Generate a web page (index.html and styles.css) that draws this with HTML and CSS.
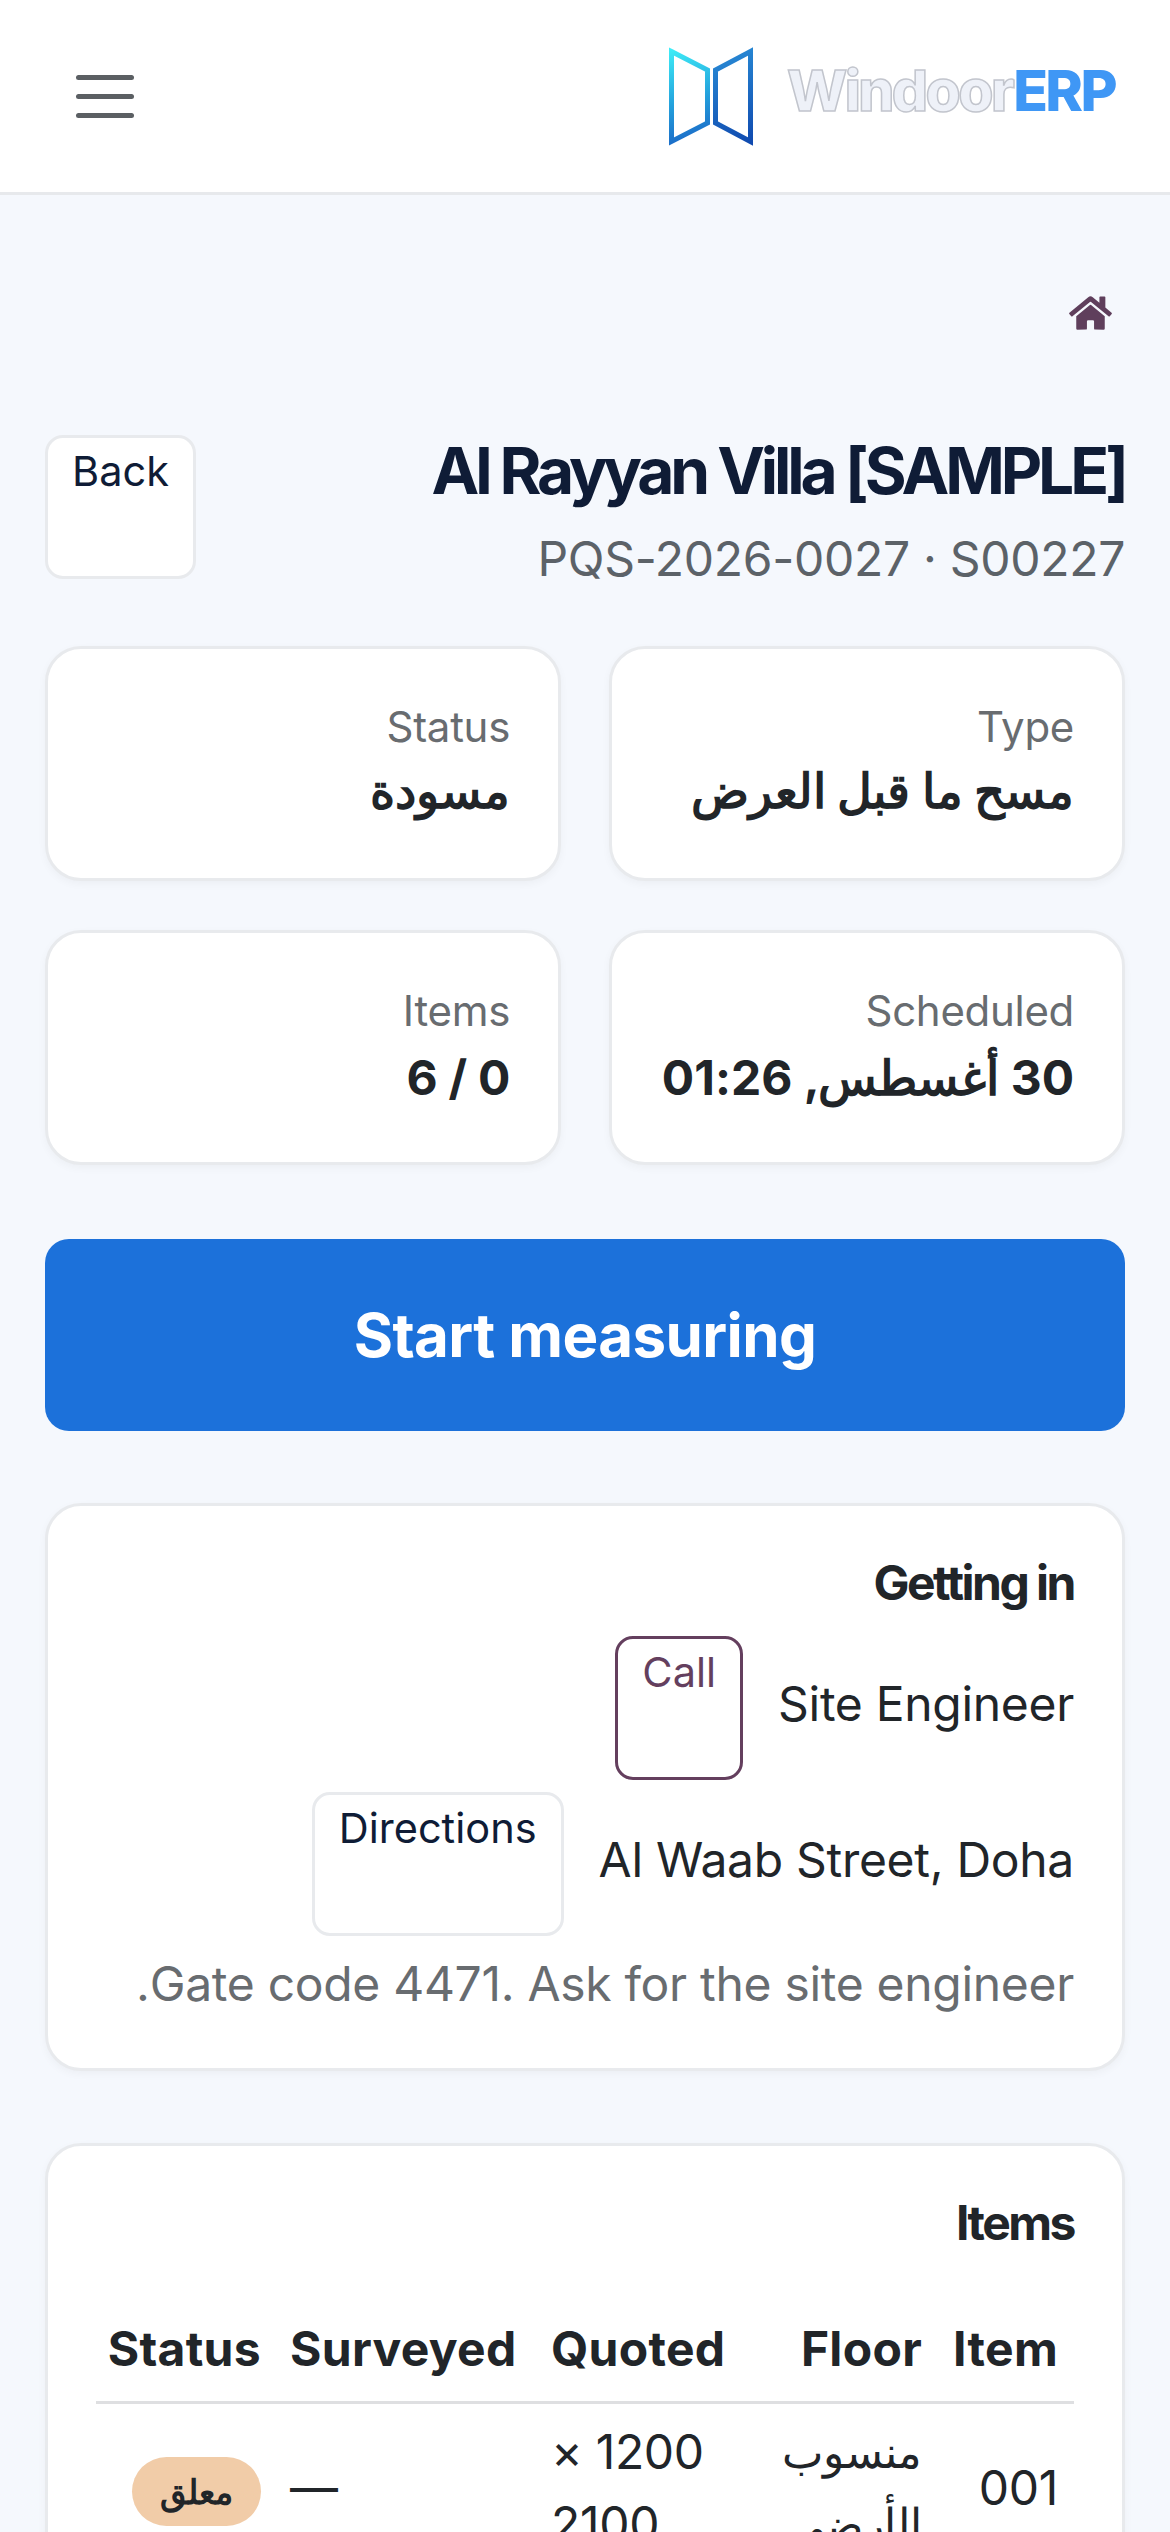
FILE: index.html
```html
<!DOCTYPE html>
<html dir="rtl" lang="ar">
    <head>
        <meta charset="utf-8">
        <meta name="viewport" content="initial-scale=1, width=device-width">
        <title>Al Rayyan Villa [SAMPLE]</title>
        <link rel="stylesheet" href="styles.css">
    </head>
    <body>
    <header class="topbar">
        <a class="brand" href="#">
            <svg class="brand-mark" viewBox="0 0 84 99" width="84" height="99">
                <defs>
                    <linearGradient id="leaf-left" gradientUnits="userSpaceOnUse" x1="0" y1="0" x2="30" y2="99">
                        <stop offset="0" stop-color="#3ff0f8"/>
                        <stop offset="0.55" stop-color="#23a0dc"/>
                        <stop offset="1" stop-color="#1a62c4"/>
                    </linearGradient>
                    <linearGradient id="leaf-right" gradientUnits="userSpaceOnUse" x1="44" y1="0" x2="84" y2="99">
                        <stop offset="0" stop-color="#2a8fd8"/>
                        <stop offset="1" stop-color="#0f48ae"/>
                    </linearGradient>
                </defs>
                <path d="M2.5 4.5 L38.5 23 V76 L2.5 94.5 Z" fill="none" stroke="url(#leaf-left)" stroke-width="5"/>
                <path d="M81.5 4.5 L46.5 23 V76 L81.5 94.5 Z" fill="none" stroke="url(#leaf-right)" stroke-width="5"/>
            </svg>
            <span class="brand-name" dir="ltr"><span class="brand-light">Windoor</span><span class="brand-blue">ERP</span></span>
        </a>
        <button class="menu-toggle" type="button" aria-label="Menu">
            <span></span>
            <span></span>
            <span></span>
        </button>
    </header>
    <main class="page">
        <nav class="crumbs">
            <svg class="home-icon" viewBox="0 0 576 512" width="43" height="38">
                <path d="M280.37 148.26L96 300.11V464a16 16 0 0 0 16 16l112.06-.29a16 16 0 0 0 15.92-16V368a16 16 0 0 1 16-16h64a16 16 0 0 1 16 16v95.64a16 16 0 0 0 16 16.05L464 480a16 16 0 0 0 16-16V300L295.67 148.26a12.19 12.19 0 0 0-15.3 0zM571.6 251.47L488 182.56V44.05a12 12 0 0 0-12-12h-56a12 12 0 0 0-12 12v72.61L318.47 43a48 48 0 0 0-61 0L4.34 251.47a12 12 0 0 0-1.6 16.9l25.5 31A12 12 0 0 0 45.15 301l235.22-193.74a12.19 12.19 0 0 1 15.3 0L530.9 301a12 12 0 0 0 16.9-1.6l25.5-31a12 12 0 0 0-1.7-16.93z"/>
            </svg>
        </nav>
        <section class="job-head">
            <div>
                <h1>Al Rayyan Villa [SAMPLE]</h1>
                <p class="job-ref">PQS-2026-0027 · S00227</p>
            </div>
            <a class="btn" href="#">Back</a>
        </section>
        <section class="stats">
            <div class="card stat">
                <div class="stat-label">Type</div>
                <div class="stat-value stat-value-ar">مسح ما قبل العرض</div>
            </div>
            <div class="card stat">
                <div class="stat-label">Status</div>
                <div class="stat-value stat-value-ar">مسودة</div>
            </div>
            <div class="card stat">
                <div class="stat-label">Scheduled</div>
                <div class="stat-value">30 أغسطس, 01:26</div>
            </div>
            <div class="card stat">
                <div class="stat-label">Items</div>
                <div class="stat-value">0 / 6</div>
            </div>
        </section>
        <a class="btn-start" href="#">Start measuring</a>
        <section class="card panel">
            <h2>Getting in</h2>
            <div class="contact-row">
                <span class="contact-text">Site Engineer</span>
                <a class="btn btn-call" href="#">Call</a>
            </div>
            <div class="contact-row">
                <span class="contact-text">Al Waab Street, Doha</span>
                <a class="btn" href="#">Directions</a>
            </div>
            <p class="note">Gate code 4471. Ask for the site engineer.</p>
        </section>
        <section class="card panel">
            <h2>Items</h2>
            <table class="items">
                <thead>
                    <tr>
                        <th class="col-item">Item</th>
                        <th class="col-floor">Floor</th>
                        <th class="col-quoted">Quoted</th>
                        <th class="col-surveyed">Surveyed</th>
                        <th class="col-status">Status</th>
                    </tr>
                </thead>
                <tbody>
                    <tr>
                        <td class="col-item">001</td>
                        <td class="col-floor floor-name">منسوب الأرضي</td>
                        <td class="col-quoted">1200 × 2100</td>
                        <td class="col-surveyed">—</td>
                        <td class="col-status"><span class="badge">معلق</span></td>
                    </tr>
                </tbody>
            </table>
        </section>
    </main>
    </body>
</html>
```

FILE: styles.css
```css
html, body {
    height: 100%;
}
body {
    margin: 0;
    height: 2532px;
    overflow: hidden;
    background-color: #f5f8fd;
    color: #212529;
    font-family: Inter, "Noto Sans", sans-serif;
    font-size: 48px;
    line-height: 72px;
    letter-spacing: -0.3px;
}
h1, h2, p {
    margin: 0;
}
a {
    text-decoration: none;
}
.topbar {
    display: flex;
    justify-content: space-between;
    align-items: center;
    height: 192px;
    padding: 0 55px 0 76px;
    background-color: #ffffff;
    border-bottom: 3px solid #e7e9ec;
}
.brand {
    display: flex;
    flex-direction: row-reverse;
    align-items: center;
    gap: 34px;
}
.brand-mark {
    display: block;
}
.brand-name {
    display: block;
    margin-top: -10px;
    font-size: 57px;
    font-weight: 800;
    line-height: 60px;
    letter-spacing: -2.6px;
}
.brand-light {
    color: #eef1f8;
    -webkit-text-stroke: 1.5px #c2c5cd;
}
.brand-blue {
    color: #3f97f5;
}
.menu-toggle {
    display: flex;
    flex-direction: column;
    gap: 14px;
    width: 58px;
    padding: 0;
    background: none;
    border: 0;
}
.menu-toggle span {
    display: block;
    height: 5px;
    border-radius: 3px;
    background-color: #5b5f63;
}
.page {
    padding: 0 45px;
}
.crumbs {
    display: flex;
    padding: 99px 13px 103px 0;
}
.home-icon {
    display: block;
    fill: #5f3f5c;
}
.job-head {
    display: flex;
    justify-content: space-between;
    align-items: flex-start;
    margin-bottom: 51px;
}
h1 {
    margin-bottom: 16px;
    color: #0f1c36;
    font-size: 64px;
    font-weight: 700;
    line-height: 72px;
    letter-spacing: -4.1px;
}
.job-ref {
    color: #5c6268;
}
.btn {
    display: block;
    box-sizing: border-box;
    min-height: 144px;
    padding: 3px 24px;
    background-color: #ffffff;
    border: 3px solid #e8eaed;
    border-radius: 18px;
    color: #0f1c36;
    font-size: 41.5px;
    line-height: 60px;
    letter-spacing: 0;
}
.btn-call {
    border-color: #643f5e;
    color: #643f5e;
}
.stats {
    display: grid;
    grid-template-columns: 1fr 1fr;
    gap: 49px 48px;
    margin-bottom: 74px;
}
.card {
    box-sizing: border-box;
    background-color: #ffffff;
    border: 3px solid #e8eaed;
    border-radius: 36px;
    box-shadow: 0 3px 9px rgba(0, 0, 0, 0.04);
}
.stat {
    height: 235px;
    padding: 46px 48px 48px;
}
.stat-label {
    color: #686c70;
    font-size: 42px;
    line-height: 63px;
}
.stat-value {
    font-weight: 700;
}
.stat-value-ar {
    margin-top: -3px;
}
.btn-start {
    display: block;
    height: 192px;
    margin-bottom: 72px;
    background-color: #1c71da;
    border-radius: 24px;
    color: #ffffff;
    font-size: 60px;
    font-weight: 700;
    line-height: 192px;
    letter-spacing: -0.6px;
    text-align: center;
}
.panel {
    margin-bottom: 72px;
    padding: 48px;
}
h2 {
    margin-bottom: 24px;
    font-size: 48px;
    font-weight: 700;
    line-height: 58px;
    letter-spacing: -2.5px;
}
.contact-row {
    display: flex;
    align-items: center;
    gap: 35px;
    margin-bottom: 12px;
}
.contact-text {
    margin-bottom: 9px;
}
.note {
    margin-top: 8px;
    color: #686c70;
}
.items {
    table-layout: fixed;
    width: 978px;
    margin-top: 45px;
    border-collapse: collapse;
}
.items th, .items td {
    box-sizing: border-box;
}
.items th {
    padding: 16px;
    border-bottom: 3px solid #dedfe1;
    font-weight: 700;
    letter-spacing: 0.3px;
    text-align: right;
}
.items td {
    padding: 12px 16px;
    vertical-align: middle;
    text-align: right;
}
.items .col-quoted, .items .col-surveyed {
    text-align: left;
}
.items .col-status {
    padding-right: 13px;
}
.items .floor-name {
    font-size: 44px;
}
.col-item {
    width: 136px;
}
.col-floor {
    width: 183px;
}
.col-quoted {
    width: 220px;
}
.col-surveyed {
    width: 261px;
}
.col-status {
    width: 178px;
}
.badge {
    display: inline-block;
    margin-top: 5px;
    padding: 9px 28px;
    background-color: #f1cca8;
    border-radius: 36px;
    font-size: 34px;
    font-weight: 600;
    line-height: 51px;
    vertical-align: middle;
}
```
